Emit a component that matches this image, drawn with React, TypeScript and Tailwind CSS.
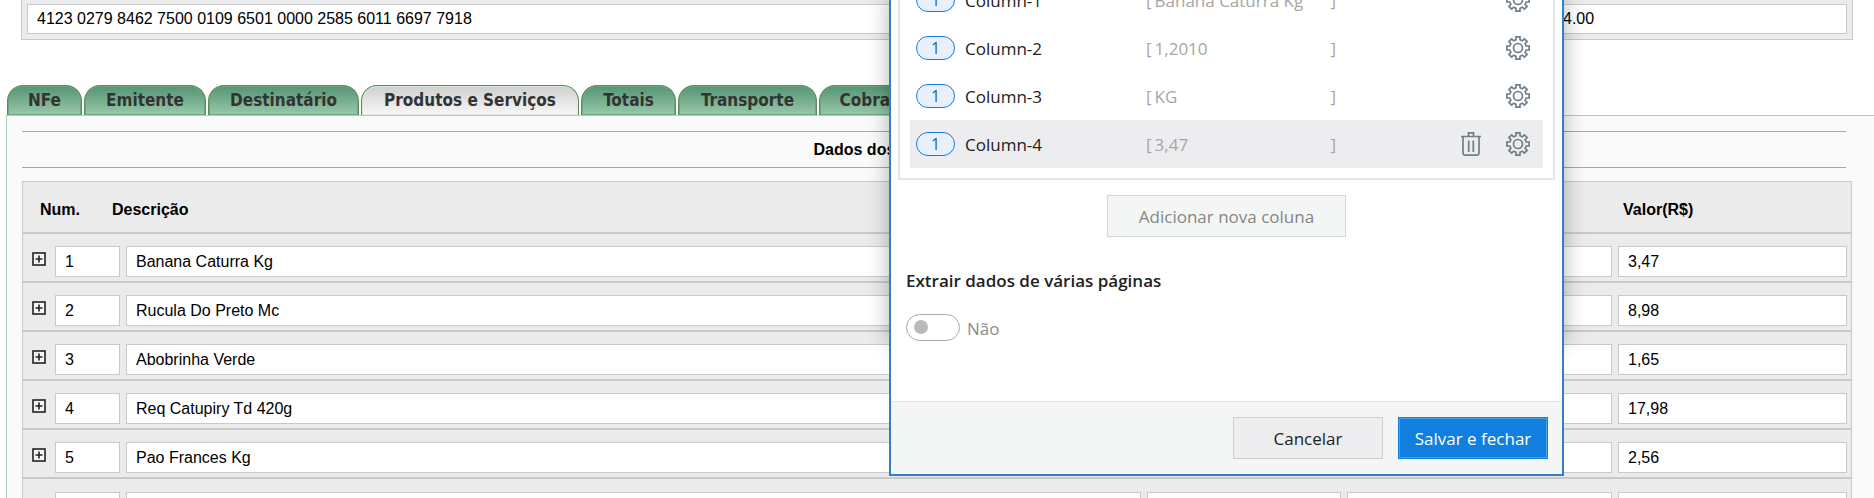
const tabs = [
  { label: "NFe", width: "w-[75px]" },
  { label: "Emitente", width: "w-[122px]" },
  { label: "Destinatário", width: "w-[151px]" },
  { label: "Produtos e Serviços", width: "w-[218px]", active: true },
  { label: "Totais", width: "w-[95px]" },
  { label: "Transporte", width: "w-[139px]" },
  { label: "Cobrança", width: "w-[122px]" },
];

const products = [
  { num: "1", name: "Banana Caturra Kg", value: "3,47" },
  { num: "2", name: "Rucula Do Preto Mc", value: "8,98" },
  { num: "3", name: "Abobrinha Verde", value: "1,65" },
  { num: "4", name: "Req Catupiry Td 420g", value: "17,98" },
  { num: "5", name: "Pao Frances Kg", value: "2,56" },
  { num: "", name: "", value: "" },
];

const columns = [
  { name: "Column-1", value: "Banana Caturra Kg" },
  { name: "Column-2", value: "1,2010" },
  { name: "Column-3", value: "KG" },
  { name: "Column-4", value: "3,47", selected: true },
];

function GearIcon() {
  return (
    <svg className="size-6" viewBox="0 0 24 24" fill="none" stroke="#6f7d88" strokeWidth="1.7">
      <path d="M10 .9h4v2.900l2.300 1 2.100-1.900 2.700 2.700-1.900 2.100 1 2.300h2.900v4h-2.900l-1 2.300 1.900 2.100-2.700 2.700-2.100-1.900-2.300 1v2.900h-4v-2.900l-2.300-1-2.100 1.900-2.700-2.700 1.900-2.100-1-2.300H.9v-4h2.900l1-2.300-1.900-2.100 2.700-2.700 2.100 1.900 2.300-1z" />
      <circle cx="12" cy="12" r="4.500" />
    </svg>
  );
}

function TrashIcon() {
  return (
    <svg className="h-6 w-5" viewBox="0 0 20 24" fill="none" stroke="#6f7d88" strokeWidth="1.7">
      <path d="M0 4.500h20M7.500 4V.9h5V4M2 5v16q0 2.200 2.200 2.200h11.600q2.200 0 2.200-2.200V5M7.700 8.500V20M12.300 8.500V20" />
    </svg>
  );
}

function PlusBox() {
  return (
    <svg className="size-[14px]" viewBox="0 0 14 14" fill="none" stroke="#222">
      <rect x="1" y="1" width="12" height="12" fill="#f4f4f4" strokeWidth="1.600" />
      <path d="M3.500 7h7M7 3.500v7" strokeWidth="1.600" />
    </svg>
  );
}

function Field({ label, value, className = "" }: { label: string; value: string; className?: string }) {
  return (
    <input
      type="text"
      aria-label={label}
      defaultValue={value}
      className={`block min-w-0 border border-[#c9c9c9] bg-white pr-2 pl-[9px] text-base text-black ${className}`}
    />
  );
}

function Tabs() {
  return (
    <div role="tablist" className="flex gap-0.5 pl-[7px] font-['DejaVu_Sans_Condensed','DejaVu_Sans',sans-serif]">
      {tabs.map((t) => (
        <button
          key={t.label}
          type="button"
          role="tab"
          aria-selected={!!t.active}
          className={`h-[30px] shrink-0 rounded-t-[16px] border-x border-t border-[#5b8a5c] text-center text-[17px] font-bold whitespace-nowrap text-[#333] ${t.width} ${
            t.active
              ? "bg-linear-to-b from-[#cfcfcf] to-[#f8f8f8] inset-ring inset-ring-[#d9ead9]"
              : "bg-linear-to-b from-[#559570] to-[#98c9ac] inset-ring inset-ring-[#6fa581]"
          }`}
        >
          {t.label}
        </button>
      ))}
    </div>
  );
}

function ProductTable() {
  return (
    <div className="mt-[13px] mr-[22px] ml-[15px] border border-[#c9c9c9] bg-[#ebebeb]">
      <table className="w-full table-fixed border-collapse text-left">
        <colgroup>
          <col className="w-[85px]" />
          <col className="w-[15px]" />
          <col />
          <col className="w-[200px]" />
          <col className="w-[271px]" />
          <col className="w-[236px]" />
        </colgroup>
        <thead>
          <tr className="h-[51px] text-base">
            <th className="p-0 pt-1.5 pl-[17px]">Num.</th>
            <th className="p-0 pt-1.5 pl-1" colSpan={2}>Descrição</th>
            <td colSpan={2} />
            <th className="p-0 pt-1.5 pl-2">Valor(R$)</th>
          </tr>
        </thead>
        <tbody>
          {products.map((p, i) => (
            <tr key={i} className="h-[49px] border-t-2 border-[#c9c9c9]">
              <td className="p-0" colSpan={2}>
                <div className="flex items-start pt-3 pr-[3px] pb-1 pl-[9px]">
                  <button type="button" aria-label="+" className="mt-1.5 mr-[9px]">
                    <PlusBox />
                  </button>
                  <Field label="Num." value={p.num} className="h-[31px] flex-1" />
                </div>
              </td>
              <td className="px-[3px] pt-3 pb-1">
                <Field label="Descrição" value={p.name} className="h-[31px] w-full" />
              </td>
              <td className="px-[3px] pt-3 pb-1">
                <Field label="" value="" className="h-[31px] w-full" />
              </td>
              <td className="px-[3px] pt-3 pb-1">
                <Field label="" value="" className="h-[31px] w-full" />
              </td>
              <td className="pt-3 pr-1 pb-1 pl-[3px]">
                <Field label="Valor(R$)" value={p.value} className="h-[31px] w-full" />
              </td>
            </tr>
          ))}
        </tbody>
      </table>
    </div>
  );
}

function ColumnRow({ name, value, selected }: { name: string; value: string; selected?: boolean }) {
  return (
    <li className={`flex h-12 items-center pr-[13px] pl-1.5 ${selected ? "bg-[#ededef]" : ""}`}>
      <span className="flex h-6 w-[39px] items-center justify-center rounded-full border border-[#1b7ad9] bg-[#e8f1fb] text-base text-[#2463ad]">
        1
      </span>
      <span className="ml-2.5 w-[181px] pt-0.5 text-[17px] text-[#222]">{name}</span>
      <span className="flex w-[190px] gap-[3px] pt-0.5 text-[17px] text-[#a6a6a6]">
        <span>[</span>
        <span className="flex-1 whitespace-nowrap">{value}</span>
        <span>]</span>
      </span>
      <span className="ml-auto flex items-center gap-[25px]">
        {selected && (
          <button type="button" aria-label={`${name} -`}>
            <TrashIcon />
          </button>
        )}
        <button type="button" aria-label={name}>
          <GearIcon />
        </button>
      </span>
    </li>
  );
}

function ExtractDialog() {
  return (
    <div className="absolute top-0 left-[889px] w-[675px] font-['Open_Sans','Noto_Sans',sans-serif]">
      <div className="absolute inset-x-1 top-0 h-[340px] shadow-[0_0_20px_4px_rgba(0,0,0,0.3)]" />
      <section role="dialog" className="relative border-x-2 border-b-2 border-[#2f7fcb] bg-white">
        <div className="mx-[7px] h-[180px] overflow-hidden border-x-2 border-b-2 border-[#e6e6e6] px-2.5">
          <ul className="-mt-6">
            {columns.map((c) => (
              <ColumnRow key={c.name} {...c} />
            ))}
          </ul>
        </div>
        <div className="mt-[15px] flex justify-center">
          <button type="button" className="h-[42px] w-[239px] border border-[#d5d8d8] bg-[#f4f6f6] pt-0.5 text-[17px] text-[#858585]">
            Adicionar nova coluna
          </button>
        </div>
        <div className="px-[15px] pt-8 pb-[60px]">
          <h2 className="text-[17px] leading-6 font-semibold text-[#222]">Extrair dados de várias páginas</h2>
          <label className="mt-[21px] flex items-center gap-[7px]">
            <input
              type="checkbox"
              role="switch"
              className="h-[27px] w-[54px] appearance-none rounded-full border border-[#a9a9a9] bg-white before:mt-[5px] before:ml-[7px] before:block before:size-[14px] before:rounded-full before:bg-[#b8babc]"
            />
            <span className="pt-0.5 text-[17px] leading-6 text-[#8c8c8c]">Não</span>
          </label>
        </div>
        <footer className="flex justify-end gap-[15px] border-t border-[#e0e3e3] bg-[#f4f6f6] px-3.5 py-[15px]">
          <button type="button" className="h-[42px] w-[150px] border border-[#cbcdd0] bg-[#ededef] pt-0.5 text-[17px] text-[#222]">
            Cancelar
          </button>
          <button
            type="button"
            className="h-[42px] w-[150px] border border-[#107fe0] bg-[#107fe0] pt-0.5 text-[17px] text-white inset-ring inset-ring-[#4a9fe9]"
          >
            Salvar e fechar
          </button>
        </footer>
      </section>
    </div>
  );
}

export default function App() {
  return (
    <main className="relative h-screen overflow-hidden bg-white font-['Liberation_Sans',Arial,sans-serif] text-black">
      <div className="mr-[21px] ml-[21px] flex gap-1.5 border-x border-b border-[#c9c9c9] bg-[#ebebeb] px-[5px] pt-1 pb-[5px]">
        <Field label="NFe" value="4123 0279 8462 7500 0109 6501 0000 2585 6011 6697 7918" className="h-[30px] flex-1" />
        <Field label="4.00" value="4.00" className="h-[30px] w-[294px]" />
      </div>
      <div className="mt-[45px]">
        <Tabs />
      </div>
      <div className="ml-1.5 border-t border-l border-[#a9d1bc] bg-[#fafafa] pt-[15px]">
        <h1 className="mr-7 ml-[15px] flex h-[37px] items-center justify-center border-y border-[#a6a6a6] text-base font-bold">
          Dados dos Produtos e Serviços
        </h1>
        <ProductTable />
      </div>
      <ExtractDialog />
    </main>
  );
}
